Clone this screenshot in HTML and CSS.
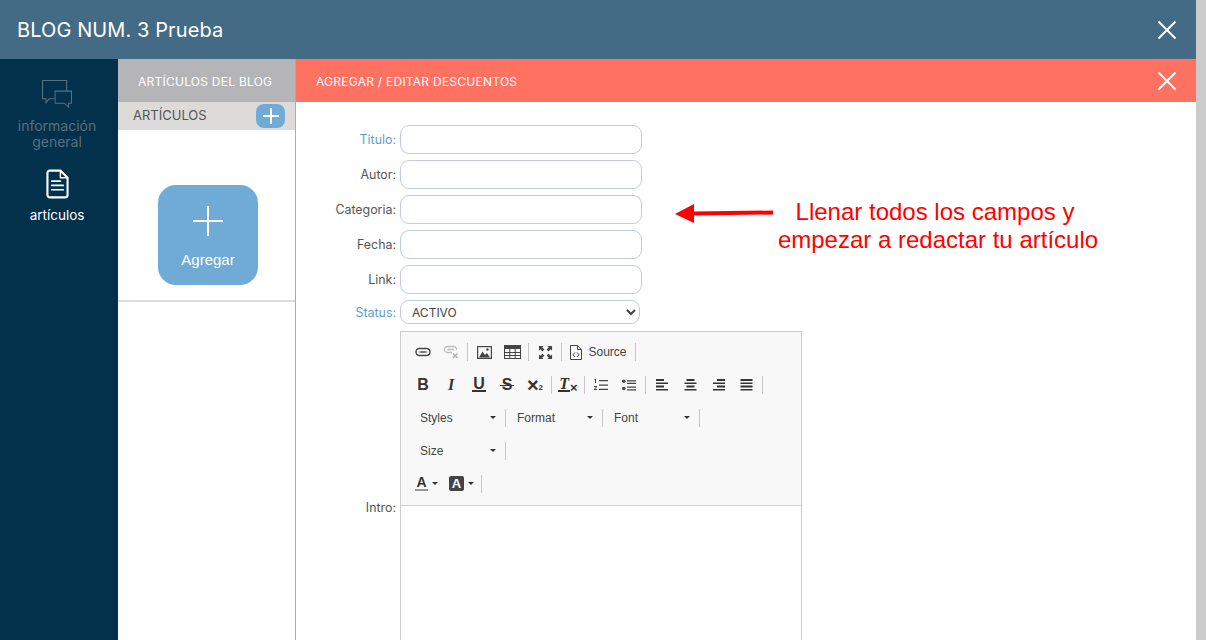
FILE: index.html
```html
<!DOCTYPE html>
<html>
<head>
	<meta charset="utf-8" />
	<title>BLOG NUM. 3 Prueba</title>
	<link rel="stylesheet" href="styles.css">
</head>
<body>
	<div class="page">
		<div class="window">
			<header class="top_bar">
				<h1>BLOG NUM. 3 Prueba</h1>
				<svg class="close" width="20" height="20" viewBox="0 0 20 20"><path d="M1.5 1.5L18.5 18.5M18.5 1.5L1.5 18.5" /></svg>
			</header>
			<div class="body_row">
				<nav class="side_nav">
					<div class="nav_item dim">
						<svg width="31" height="28" viewBox="0 0 32 29" fill="none" stroke="currentColor" stroke-width="1.1">
							<path d="M12.500 19.500H7.500L4 23.500V19.500H.5V.5H25.500V11.500" />
							<path d="M13.500 11.500H30.500V24H27.500V28L23 24H13.500Z" />
						</svg>
						<span>información<br>general</span>
					</div>
					<div class="nav_item">
						<svg width="23" height="30" viewBox="0 0 24 31" fill="none" stroke="currentColor" stroke-width="2.2" stroke-linejoin="round">
							<path d="M4 1.500H15L22.500 9V27A2.500 2.500 0 0 1 20 29.500H4A2.500 2.500 0 0 1 1.500 27V4A2.500 2.500 0 0 1 4 1.500Z" />
							<path d="M15 1.500V9H22.500" stroke-width="1.5" />
							<path d="M6 12.500H15M6 17H18M6 21.500H18" stroke-linecap="round" stroke-width="1.8" />
						</svg>
						<span>artículos</span>
					</div>
				</nav>
				<aside class="list_col">
					<div class="list_title">ARTÍCULOS DEL BLOG</div>
					<div class="list_sub">
						<span>ARTÍCULOS</span>
						<button class="mini_add">
							<svg width="18" height="18" viewBox="0 0 18 18"><path d="M9 1V17M1 9H17" /></svg>
						</button>
					</div>
					<div class="add_area">
						<div class="add_card">
							<svg width="32" height="32" viewBox="0 0 32 32"><path d="M16 1V31M1 16H31" /></svg>
							<span>Agregar</span>
						</div>
					</div>
				</aside>
				<main class="edit_col">
					<div class="edit_title">
						<span>AGREGAR / EDITAR DESCUENTOS</span>
						<svg class="close" width="20" height="20" viewBox="0 0 20 20"><path d="M1.5 1.5L18.5 18.5M18.5 1.5L1.5 18.5" /></svg>
					</div>
					<form class="form">
						<div class="form_row"><label class="req">Titulo:</label><input type="text"></div>
						<div class="form_row"><label>Autor:</label><input type="text"></div>
						<div class="form_row"><label>Categoria:</label><input type="text"></div>
						<div class="form_row"><label>Fecha:</label><input type="text"></div>
						<div class="form_row"><label>Link:</label><input type="text"></div>
						<div class="form_row"><label class="req">Status:</label><select><option>ACTIVO</option></select></div>
						<div class="form_row">
							<label>Intro:</label>
							<div class="editor">
								<div class="toolbar">
									<div class="tb_row">
										<span class="btn"><svg width="16" height="10" viewBox="0 0 16 10" fill="none" stroke="#444" stroke-width="1.4"><rect x="1" y="1.500" width="14" height="7" rx="3.500" /><path d="M4.500 5H11.500" /></svg></span>
										<span class="btn"><svg width="16" height="14" viewBox="0 0 16 14" fill="none" stroke="#bdbdbd" stroke-width="1.3"><path d="M9 7.500H4.500A3 3 0 0 1 4.500 1.500H11A3 3 0 0 1 13.500 5M4.500 4.500H11" /><path d="M10 8.500L14.500 13M14.500 8.500L10 13" stroke="#aaa" /></svg></span>
										<i class="sep"></i>
										<span class="btn"><svg width="15" height="13" viewBox="0 0 15 13"><rect x=".6" y=".6" width="13.800" height="11.800" fill="none" stroke="#444" stroke-width="1.2" /><path d="M2 11.500L5.500 5.500L8 9L10 7L13 11.500Z" fill="#444" /><circle cx="10.500" cy="3.500" r="1.200" fill="#444" /></svg></span>
										<span class="btn"><svg width="17" height="14" viewBox="0 0 17 14" fill="none" stroke="#444"><rect x=".5" y=".5" width="16" height="13" /><path d="M.5 2.500H16.500" stroke-width="3" /><path d="M.5 7.500H16.500M.5 10.500H16.500M5.800 4V13.500M11.200 4V13.500" /></svg></span>
										<i class="sep"></i>
										<span class="btn"><svg width="15" height="15" viewBox="0 0 16 16" fill="#444"><path d="M1 1H6L4.500 2.500L6.800 4.800L4.800 6.800L2.500 4.500L1 6ZM15 1V6L13.500 4.500L11.200 6.800L9.200 4.800L11.500 2.500L10 1ZM1 15V10L2.500 11.500L4.800 9.200L6.800 11.200L4.500 13.500L6 15ZM15 15H10L11.500 13.500L9.200 11.200L11.200 9.200L13.500 11.500L15 10Z" /></svg></span>
										<i class="sep"></i>
										<span class="btn btn_text"><svg width="12" height="15" viewBox="0 0 12 15" fill="none" stroke="#444"><path d="M.5 .5H7.500L11.500 4.500V14.500H.5Z" /><path d="M7.500 .5V4.500H11.500" /><path d="M5 7.500L3 9.800L5 12M7 7.500L9 9.800L7 12" /></svg>Source</span>
										<i class="sep"></i>
									</div>
									<div class="tb_row">
										<span class="btn"><b class="glyph">B</b></span>
										<span class="btn"><em class="glyph serif">I</em></span>
										<span class="btn"><b class="glyph under">U</b></span>
										<span class="btn"><b class="glyph strike">S</b></span>
										<span class="btn"><b class="glyph big_x">×</b><b class="tiny">2</b></span>
										<i class="sep"></i>
										<span class="btn"><em class="glyph serif under">T</em><b class="tiny big">×</b></span>
										<i class="sep"></i>
										<span class="btn"><svg width="16" height="14" viewBox="0 0 16 14" fill="#444"><path d="M6 2H15V3.200H6ZM6 6.500H15V7.700H6ZM6 10.800H15V12H6Z" /><path d="M1.500 1H3V5H2V2.200H1.500ZM1 8H4V9L2 11H4V12H1V11L3 9H1Z" /></svg></span>
										<span class="btn"><svg width="16" height="14" viewBox="0 0 16 14" fill="#444"><circle cx="2.800" cy="3.200" r="1.800" /><circle cx="2.800" cy="10.500" r="1.800" /><path d="M6 2.200H15V3.400H6ZM6 4.800H15V6H6ZM6 8.500H15V9.700H6ZM6 11.300H15V12.500H6Z" /></svg></span>
										<i class="sep"></i>
										<span class="btn"><svg width="13" height="13" viewBox="0 0 13 13" fill="#333"><path d="M0 1H8V3H0ZM0 4.500H12V6H0ZM0 7.500H8V9.500H0ZM0 11H12V12.500H0Z" /></svg></span>
										<span class="btn"><svg width="13" height="13" viewBox="0 0 13 13" fill="#333"><path d="M2.500 1H10.500V3H2.500ZM.5 4.500H12.500V6H.5ZM2.500 7.500H10.500V9.500H2.500ZM.5 11H12.500V12.500H.5Z" /></svg></span>
										<span class="btn"><svg width="13" height="13" viewBox="0 0 13 13" fill="#333"><path d="M5 1H13V3H5ZM1 4.500H13V6H1ZM5 7.500H13V9.500H5ZM1 11H13V12.500H1Z" /></svg></span>
										<span class="btn"><svg width="13" height="13" viewBox="0 0 13 13" fill="#333"><path d="M.5 1H12.500V3H.5ZM.5 4.500H12.500V6H.5ZM.5 7.500H12.500V9.500H.5ZM.5 11H12.500V12.500H.5Z" /></svg></span>
										<i class="sep"></i>
									</div>
									<div class="tb_row">
										<span class="combo first">Styles<i class="caret"></i></span><i class="sep"></i>
										<span class="combo">Format<i class="caret"></i></span><i class="sep"></i>
										<span class="combo">Font<i class="caret"></i></span><i class="sep"></i>
									</div>
									<div class="tb_row">
										<span class="combo first">Size<i class="caret"></i></span><i class="sep"></i>
									</div>
									<div class="tb_row">
										<span class="btn color_btn"><b class="text_a">A</b><i class="caret"></i></span>
										<span class="btn color_btn"><b class="back_a">A</b><i class="caret"></i></span>
										<i class="sep"></i>
									</div>
								</div>
							</div>
						</div>
					</form>
				</main>
			</div>
		</div>
		<div class="scroll_strip"></div>

		<svg class="note_arrow" width="100" height="20" viewBox="0 0 100 20"><path d="M0 11L19 1V8.500L98 7.500V11.500L19 12.500V20Z" fill="#ff0000" /></svg>
		<div class="note"><span class="note_first">Llenar todos los campos y</span>empezar a redactar tu artículo</div>
	</div>
</body>
</html>
```

FILE: styles.css
```css
* {
	margin: 0;
	padding: 0;
	box-sizing: border-box;
}

body {
	font-family: "Inter", "Liberation Sans", sans-serif;
	overflow: hidden;
}

.page {
	display: flex;
	width: 1206px;
	height: 640px;
	overflow: hidden;
	position: relative;
}

.window {
	width: 1196px;
	display: flex;
	flex-direction: column;
}

.scroll_strip {
	width: 10px;
	background-color: #cbcbcb;
}

.top_bar {
	height: 59px;
	flex: none;
	background-color: #436b85;
	display: flex;
	align-items: center;
	justify-content: space-between;
	padding: 0 19px 0 17px;
	color: #fff;
}

.top_bar h1 {
	font-size: 20px;
	font-weight: 400;
	letter-spacing: .1px;
}

.close {
	fill: none;
	stroke: #fff;
	stroke-width: 2;
}

.body_row {
	flex: 1;
	display: flex;
	min-height: 0;
}

/* left nav */
.side_nav {
	width: 118px;
	flex: none;
	background-color: #03304b;
	color: #fff;
	padding: 21px 4px 0 0;
}

.nav_item {
	display: flex;
	flex-direction: column;
	align-items: center;
	text-align: center;
	font-size: 13.5px;
	line-height: 16px;
}

.nav_item svg {
	margin-bottom: 8px;
}

.nav_item.dim {
	color: #56707f;
	font-size: 14px;
	margin-bottom: 19px;
}

.nav_item.dim svg {
	margin-bottom: 10px;
}

/* middle column */
.list_col {
	width: 178px;
	flex: none;
	border-right: 1px solid #aaa;
	display: flex;
	flex-direction: column;
}

.list_title {
	height: 43px;
	background-color: #b5b5b7;
	color: #fff;
	font-size: 12px;
	letter-spacing: .25px;
	line-height: 46px;
	padding-left: 20px;
}

.list_sub {
	height: 28px;
	background-color: #dcdbda;
	color: #555;
	font-size: 13px;
	display: flex;
	align-items: center;
	justify-content: space-between;
	padding: 0 10px 0 15px;
}

.list_sub span {
	padding-bottom: 2px;
}

.mini_add {
	width: 29px;
	height: 24px;
	border: 0;
	border-radius: 8px;
	background-color: #70abd5;
	display: flex;
	align-items: center;
	justify-content: center;
}

.mini_add path, .add_card path {
	fill: none;
	stroke: #fff;
	stroke-width: 2;
}

.add_area {
	height: 172px;
	border-bottom: 2px solid #dcdcdc;
	padding: 55px 0 0 40px;
}

.add_card {
	width: 100px;
	height: 100px;
	border-radius: 18px;
	background-color: #70abd5;
	color: #fff;
	font-family: "Liberation Sans", sans-serif;
	font-size: 15px;
	display: flex;
	flex-direction: column;
	align-items: center;
	padding-top: 20px;
	gap: 14px;
}

/* right panel */
.edit_col {
	flex: 1;
	min-width: 0;
	background-color: #fff;
}

.edit_title {
	height: 43px;
	background-color: #ff7161;
	color: #fff;
	font-size: 12px;
	letter-spacing: .25px;
	display: flex;
	align-items: center;
	justify-content: space-between;
	padding: 0 19px 0 20px;
}

.edit_title span {
	padding-top: 2px;
}

.form {
	padding: 23px 0 0 4px;
}

.form_row {
	display: flex;
	align-items: center;
	margin-bottom: 6px;
}

.form_row label {
	width: 96px;
	flex: none;
	margin-right: 4px;
	text-align: right;
	font-size: 12.4px;
	color: #555;
}

.form_row label.req {
	color: #5f9fcb;
}

.form_row input {
	width: 242px;
	height: 29px;
	border: 1px solid #c2cbe0;
	border-radius: 9px;
	background-color: #fff;
}

.form_row select {
	width: 240px;
	height: 24px;
	border: 1px solid #c2cbe0;
	border-radius: 9px;
	background-color: #fff;
	padding-left: 7px;
	font-family: inherit;
	font-size: 12px;
	color: #444;
}

/* text editor */
.editor {
	width: 402px;
	height: 353px;
	margin-top: 1px;
	border: 1px solid #ccc;
	font-family: "Liberation Sans", sans-serif;
	font-size: 12px;
	color: #444;
}

.toolbar {
	height: 174px;
	background-color: #f8f8f8;
	border-bottom: 1px solid #d1d1d1;
	padding-left: 8px;
}

.tb_row {
	height: 33px;
	display: flex;
	align-items: center;
}

.tb_row:first-child {
	height: 36px;
	padding-top: 4px;
}

.btn {
	width: 28px;
	height: 24px;
	display: flex;
	align-items: center;
	justify-content: center;
	flex: none;
}

.btn_text {
	width: 69px;
	gap: 6px;
}

.sep {
	width: 1px;
	height: 18px;
	margin: 0 2px;
	background-color: #c8c8c8;
	flex: none;
}

.glyph {
	font-size: 16px;
	color: #333;
	line-height: 16px;
}

.serif {
	font-family: "Liberation Serif", serif;
	font-weight: 700;
}

.under {
	border-bottom: 2px solid #333;
	line-height: 13px;
	padding: 0 1px;
}

.strike {
	position: relative;
}

.strike::after {
	content: "";
	position: absolute;
	left: -2px;
	right: -2px;
	top: 8px;
	height: 1px;
	background-color: #333;
}

.big_x {
	font-size: 20px;
}

.tiny {
	font-size: 8px;
	align-self: flex-end;
	margin-bottom: 5px;
	color: #333;
}

.tiny.big {
	font-size: 13px;
	margin-bottom: 2px;
}

.combo {
	width: 92px;
	height: 24px;
	padding-left: 9px;
	display: flex;
	align-items: center;
	justify-content: space-between;
	padding-right: 7px;
	flex: none;
}

.combo.first {
	margin-left: 2px;
}

.caret {
	width: 0;
	height: 0;
	border-left: 3px solid transparent;
	border-right: 3px solid transparent;
	border-top: 3px solid #333;
	flex: none;
}

.color_btn {
	width: 35px;
	gap: 4px;
}

.text_a {
	font-size: 14px;
	line-height: 13px;
	color: #333;
	border-bottom: 2px solid #999;
	padding: 0 1px;
}

.back_a {
	width: 15px;
	height: 15px;
	border-radius: 2px;
	background-color: #444;
	color: #fff;
	font-size: 13px;
	line-height: 15px;
	text-align: center;
}

/* note drawn over the screenshot */
.note_arrow {
	position: absolute;
	left: 675px;
	top: 203px;
}

.note {
	position: absolute;
	left: 738px;
	top: 198px;
	width: 400px;
	text-align: center;
	color: #ff0000;
	font-family: "Liberation Sans", sans-serif;
	font-size: 24px;
	line-height: 28px;
}

.note_first {
	display: block;
	padding-right: 6px;
}
```
